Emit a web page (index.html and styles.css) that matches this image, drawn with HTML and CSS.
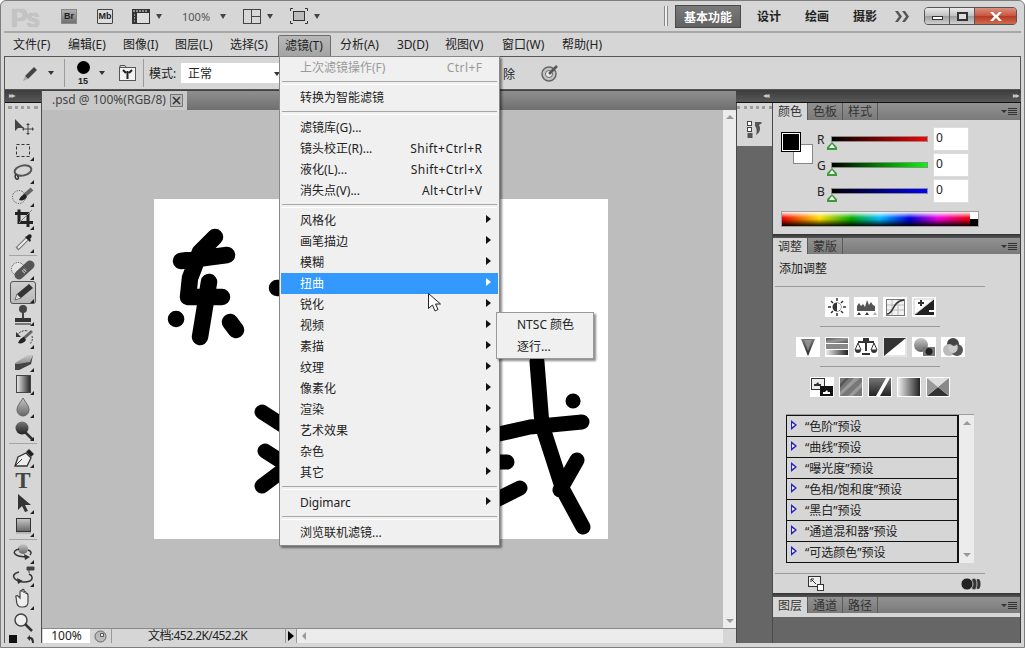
FILE: index.html
```html
<!DOCTYPE html>
<html lang="zh-CN">
<head>
<meta charset="utf-8">
<title>Photoshop</title>
<link rel="stylesheet" href="styles.css">
</head>
<body>
<svg class="defs" aria-hidden="true">
  <defs>
    <linearGradient id="gMetal" x1="0" y1="0" x2="0" y2="1"><stop offset="0" stop-color="#c8c8c8"/><stop offset="1" stop-color="#666"/></linearGradient>
    <linearGradient id="gDark" x1="0" y1="0" x2="0" y2="1"><stop offset="0" stop-color="#777"/><stop offset="1" stop-color="#222"/></linearGradient>
    <linearGradient id="gH" x1="0" y1="0" x2="1" y2="0"><stop offset="0" stop-color="#eee"/><stop offset="1" stop-color="#222"/></linearGradient>
    <linearGradient id="gDiag" x1="0" y1="0" x2="1" y2="1"><stop offset="0" stop-color="#555"/><stop offset=".5" stop-color="#999"/><stop offset="1" stop-color="#555"/></linearGradient>
  </defs>
</svg>
<div class="window">
  <header class="titlebar">
    <div class="title-left">
      <span class="ps-logo">Ps</span>
      <span class="app-btn app-br">Br</span>
      <span class="app-btn app-mb">Mb</span>
      <svg class="ti ti-film" width="18" height="15" viewBox="0 0 18 15"><rect x=".5" y=".5" width="17" height="14" fill="#ddd" stroke="#333"/><path d="M0 0h18v4H0zM0 4h5v11H0z" fill="#333"/><path d="M2 1v2M5 1v2M8 1v2M11 1v2M14 1v2M2 6h1M2 9h1M2 12h1" stroke="#eee"/></svg>
      <i class="caret caret-title c1"></i>
      <span class="zoom-label">100%</span>
      <i class="caret caret-title c2"></i>
      <svg class="ti ti-layout" width="18" height="15" viewBox="0 0 18 15"><rect width="18" height="15" fill="#444"/><rect x="1" y="1" width="7" height="13" fill="#d8d8d8"/><rect x="9" y="1" width="8" height="6" fill="#d8d8d8"/><rect x="9" y="8" width="8" height="6" fill="#d8d8d8"/></svg>
      <i class="caret caret-title c3"></i>
      <svg class="ti ti-screen" width="18" height="16" viewBox="0 0 18 16"><path d="M.5 3V.5H3M15 .5h2.5V3M17.5 13v2.5H15M3 15.5H.5V13" fill="none" stroke="#333"/><rect x="3.5" y="3.5" width="11" height="9" fill="#bbb" stroke="#333"/></svg>
      <i class="caret caret-title c4"></i>
    </div>
    <div class="title-right">
      <i class="double-line"></i>
      <span class="ws-btn ws-active">基本功能</span>
      <span class="ws-btn ws-design">设计</span>
      <span class="ws-btn ws-paint">绘画</span>
      <span class="ws-btn ws-photo">摄影</span>
      <svg class="ws-more" width="15" height="11" viewBox="0 0 15 11"><path d="M0 0h3l4 5.5L3 11H0l4-5.5zM7 0h3l4 5.5-4 5.5H7l4-5.5z" fill="#555"/></svg>
      <div class="win-btns">
        <span class="win-btn win-min"><i></i></span>
        <span class="win-btn win-max"><i></i></span>
        <span class="win-btn win-close"><svg width="12" height="9" viewBox="0 0 12 9"><path d="M0 0h3l3 3 3-3h3L8 4.5 12 9H9L6 6 3 9H0l4-4.5z" fill="#fff"/></svg></span>
      </div>
    </div>
  </header>

  <nav class="menubar">
    <span class="mi">文件(F)</span><span class="mi">编辑(E)</span><span class="mi">图像(I)</span><span class="mi">图层(L)</span><span class="mi">选择(S)</span><span class="mi mi-active">滤镜(T)</span><span class="mi">分析(A)</span><span class="mi">3D(D)</span><span class="mi">视图(V)</span><span class="mi">窗口(W)</span><span class="mi">帮助(H)</span>
  </nav>

  <div class="options">
    <i class="opt-handle"></i>
    <svg class="opt-pencil" width="16" height="16" viewBox="0 0 16 16"><path d="M3 11 12 2l3 3-9 9z" fill="#444"/><path d="M3 11l3 3-5 2z" fill="#aaa"/></svg>
    <i class="caret opt-c1"></i>
    <i class="opt-sep opt-s1"></i>
    <div class="brush-preview"><i class="brush-dot"></i><span class="brush-size">15</span></div>
    <i class="caret opt-c2"></i>
    <svg class="opt-brushes" width="17" height="16" viewBox="0 0 17 16"><rect x=".5" y="2.500" width="16" height="13" fill="#f2f2f2" stroke="#555"/><path d="M1 2V.5h5L7 2" fill="none" stroke="#555"/><path d="M4 5l3 3M13 5l-3 3M8.500 6v8" stroke="#222" stroke-width="2"/></svg>
    <i class="opt-sep opt-s2"></i>
    <span class="opt-label">模式:</span>
    <div class="opt-select">正常<i class="caret"></i></div>
    <span class="opt-auto">除</span>
    <svg class="opt-target" width="18" height="18" viewBox="0 0 18 18"><circle cx="8" cy="10" r="7" fill="#c4c4c4" stroke="#666" stroke-width="1.500"/><circle cx="8" cy="10" r="3.500" fill="#eee" stroke="#666"/><path d="M8 10 16 2" stroke="#555" stroke-width="2.500"/></svg>
  </div>

  <div class="main">
    <aside class="toolbox">
      <div class="dark-bar"><span class="bar-arrows">&#9656;&#9656;</span></div>
      <div class="tool-handle"></div>
      <div class="tool"><svg width="36" height="23" viewBox="0 0 36 23"><path d="M10 3v12l3-3h6z" fill="#444"/><path d="M23 8v10M18 13h10" stroke="#444"/><path d="M23 7l-2 2h4zM23 19l-2-2h4zM17 13l2-2v4zM29 13l-2-2v4z" fill="#444"/></svg></div>
      <div class="tool more"><svg width="36" height="23" viewBox="0 0 36 23"><rect x="11.500" y="5.500" width="13" height="12" fill="none" stroke="#333" stroke-dasharray="3 2"/></svg></div>
      <div class="tool more"><svg width="36" height="23" viewBox="0 0 36 23"><ellipse cx="18" cy="8.500" rx="8.500" ry="5" fill="none" stroke="#555" stroke-width="2" transform="rotate(-12 18 8.500)"/><path d="M11 12c-2 3 0 6 2 5 1-1 0-3-1-3" fill="none" stroke="#333" stroke-width="1.500"/></svg></div>
      <div class="tool more"><svg width="36" height="23" viewBox="0 0 36 23"><circle cx="14" cy="12" r="6.500" fill="none" stroke="#333" stroke-dasharray="1 1.500"/><path d="M27 4 19 11" stroke="#666" stroke-width="4"/><path d="M20 9c-3 1-5 3-6 6 3 1 6 0 8-3z" fill="#222"/></svg></div>
      <div class="tool more"><svg width="36" height="23" viewBox="0 0 36 23"><path d="M10 5.500h13V19M14 1.500v13h14" fill="none" stroke="#222" stroke-width="3"/><path d="M14 15 27 2" stroke="#888"/></svg></div>
      <div class="tool more"><svg width="36" height="23" viewBox="0 0 36 23"><path d="M12 18 23 7" stroke="#777" stroke-width="4"/><path d="M13 17 22 8" stroke="#eee" stroke-width="2"/><path d="M20 6l5 5 1-2-1-1 1-1c2-3-1-5-3-3l-1 1z" fill="#222"/></svg></div>
      <i class="tool-sep"></i>
      <div class="tool more"><svg width="36" height="23" viewBox="0 0 36 23"><circle cx="13" cy="11" r="6.500" fill="#e4e4e4" stroke="#333" stroke-dasharray="1 1.500"/><path d="M14 17 25 7" stroke="#555" stroke-width="9" stroke-linecap="round"/><path d="M18 14l3-3" stroke="#ccc" stroke-width="4" stroke-dasharray="1 1"/></svg></div>
      <div class="tool more tool-active"><svg width="36" height="23" viewBox="0 0 36 23"><path d="M10 19l2-6 12-10 4 4-12 10z" fill="#333"/><path d="M10 19l2-6 4 4z" fill="#ddd" stroke="#333" stroke-width=".5"/></svg></div>
      <div class="tool more"><svg width="36" height="23" viewBox="0 0 36 23"><circle cx="18" cy="5" r="4" fill="#444"/><path d="M17 8h2v6h-2z" fill="#444"/><path d="M10 14h16v4H10z" fill="#333"/><path d="M10 19h16v2H10z" fill="#777"/></svg></div>
      <div class="tool more"><svg width="36" height="23" viewBox="0 0 36 23"><path d="M27 4 18 12" stroke="#666" stroke-width="3"/><path d="M19 10c-3 1-5 3-6 6 3 1 6 0 8-3z" fill="#222"/><path d="M12 8c3-4 8-5 11-4M27 9c1 3 0 6-2 8" fill="none" stroke="#444" stroke-dasharray="2 1"/><path d="M11 5v5h5z" fill="#333"/></svg></div>
      <div class="tool more"><svg width="36" height="23" viewBox="0 0 36 23"><path d="M10 13 23 5h5l-2 9-12 6h-4z" fill="url(#gMetal)"/><path d="M10 14v6h4l12-6 2-9-3 7-12 2z" fill="#444"/></svg></div>
      <div class="tool more"><svg width="36" height="23" viewBox="0 0 36 23"><rect x="11.500" y="2.500" width="14" height="17" fill="url(#gH)" stroke="#444"/></svg></div>
      <div class="tool more"><svg width="36" height="23" viewBox="0 0 36 23"><path d="M18 2c3 5 6 8 6 12a6 6 0 0 1-12 0c0-4 3-7 6-12z" fill="url(#gMetal)" stroke="#666"/></svg></div>
      <div class="tool more"><svg width="36" height="23" viewBox="0 0 36 23"><path d="M20 13l8 8" stroke="#333" stroke-width="2.500"/><circle cx="17" cy="9" r="6.500" fill="url(#gDark)"/></svg></div>
      <i class="tool-sep"></i>
      <div class="tool more"><svg width="36" height="23" viewBox="0 0 36 23"><path d="M10 20l3-9 8-4 5 5-4 8z" fill="#eee" stroke="#333" stroke-width="1.300"/><path d="M10 20l7-7" stroke="#333"/><path d="M21 6l3-3 5 5-3 3z" fill="#222"/></svg></div>
      <div class="tool"><svg width="36" height="23" viewBox="0 0 36 23"><text x="18" y="19" text-anchor="middle" class="tool-t">T</text></svg></div>
      <div class="tool more"><svg width="36" height="23" viewBox="0 0 36 23"><path d="M13 2v16l4-4 3 6 3-1-3-6h6z" fill="#333"/></svg></div>
      <div class="tool more"><svg width="36" height="23" viewBox="0 0 36 23"><rect x="11.500" y="3.500" width="14" height="13" fill="url(#gMetal)" stroke="#333"/><path d="M11 18h15" stroke="#999"/></svg></div>
      <i class="tool-sep"></i>
      <div class="tool more"><svg width="36" height="23" viewBox="0 0 36 23"><circle cx="18" cy="7" r="5" fill="url(#gMetal)"/><path d="M14 7c-4 1-6 3-4 5s8 3 13 3" fill="none" stroke="#333" stroke-width="1.500"/><path d="M23 8c3 1 4 3 2 5" fill="none" stroke="#333" stroke-width="1.500"/><path d="M19 12l6 3-5 3z" fill="#333"/></svg></div>
      <div class="tool more"><svg width="36" height="23" viewBox="0 0 36 23"><path d="M22 2h7v3h-7zM24 5v3" fill="#444" stroke="#444"/><path d="M14 7c-5 1-7 4-4 7s10 4 15 2c3-2 3-5-1-7" fill="none" stroke="#333" stroke-width="1.500"/><path d="M12 13l6 3-5 3z" fill="#333"/></svg></div>
      <div class="tool more"><svg width="36" height="23" viewBox="0 0 36 23"><path d="M11 9c-1-1 1-2 2-1l2 2 0-6c0-2 2-2 2 0v-2c0-1 2-1 2 0v3c0-2 2-2 2 0v1c0-1 2-1 2 1v7c0 3-2 5-5 5h-2c-2 0-3-1-4-3z" fill="#eee" stroke="#444" stroke-width="1.200"/></svg></div>
      <div class="tool"><svg width="36" height="23" viewBox="0 0 36 23"><circle cx="16" cy="9" r="6" fill="#eee" stroke="#444" stroke-width="1.500"/><path d="M20 13l7 7" stroke="#333" stroke-width="2.500"/></svg></div>
      <div class="tool-colors"><i class="tc-fg"></i><svg width="9" height="8" viewBox="0 0 9 8"><path d="M1 3l3-3v2c3 0 4 2 4 6H6c0-2-1-4-2-4v2z" fill="#333"/></svg></div>
    </aside>

    <section class="docs">
      <div class="tabstrip">
        <div class="doc-tab"><span>.psd @ 100%(RGB/8)</span><svg width="13" height="13" viewBox="0 0 13 13"><rect x=".5" y=".5" width="12" height="12" fill="#bbb" stroke="#777"/><path d="M3 3l7 7M10 3l-7 7" stroke="#333" stroke-width="1.500"/></svg></div>
      </div>
      <div class="workspace">
        <div class="canvas-area">
          <div class="canvas">
            <svg width="454" height="340" viewBox="154 199 454 340" class="ink">
              <path class="ink-thick" d="M181 261 227 255M215 237 200 252 190 278 188 297 222 297M209 282 200 337M176 319h.1M230 322 236 330M277 288h10"/>
              <path d="M262 412 290 430M265 451 290 467M262 486 290 465"/>
              <path d="M537 362 542 425 563 490 583 527M490 436 530 427 582 422M573 401h.1M577 460 560 490M490 462 507 462M490 503 520 488"/>
            </svg>
          </div>
        </div>
        <div class="vscroll"><i class="arrow-up"></i><i class="arrow-down"></i></div>
      </div>
      <div class="statusbar">
        <span class="zoom-field">100%</span>
        <span class="status-icon"><svg width="13" height="13" viewBox="0 0 13 13"><circle cx="6.500" cy="6.500" r="5.500" fill="#bbb" stroke="#666"/><path d="M6.500 3.500h3v3h-3z" fill="#eee" stroke="#555"/></svg></span>
        <span class="status-text">文档:452.2K/452.2K</span>
        <span class="status-arrow"><i></i></span>
        <div class="hscroll"><i class="arrow-left"></i></div>
      </div>
    </section>

    <div class="right-col">
      <div class="dark-bar dark-bar-right"><span class="bar-arrows">&#9666;&#9666;</span><span class="bar-arrows">&#9656;&#9656;</span></div>
      <div class="right-row">
        <aside class="dock">
          <div class="dock-box">
            <div class="tool-handle dock-handle"></div>
            <svg class="dock-icon" width="16" height="17" viewBox="0 0 16 17"><rect x=".5" y=".5" width="4" height="4" fill="#fff" stroke="#444"/><rect x=".5" y="6.500" width="4" height="4" fill="#fff" stroke="#444"/><rect x=".5" y="12" width="5" height="5" fill="#555"/><path d="M8 1h6l1 1-3 2c2 3 1 8-3 10 1-3 1-7-1-9z" fill="#555"/></svg>
          </div>
        </aside>
        <aside class="panels">
          <div class="tabs">
            <span class="tab tab-on">颜色</span><span class="tab">色板</span><span class="tab">样式</span>
            <span class="panel-menu"><i></i><b></b></span>
          </div>
          <div class="color-panel">
            <div class="color-top">
              <div class="swatches"><i class="sw-bg"></i><i class="sw-fg"></i></div>
              <div class="sliders">
                <div class="slider"><span class="s-label">R</span><div class="track track-r"><i class="thumb"></i></div><span class="s-input">0</span></div>
                <div class="slider"><span class="s-label">G</span><div class="track track-g"><i class="thumb"></i></div><span class="s-input">0</span></div>
                <div class="slider"><span class="s-label">B</span><div class="track track-b"><i class="thumb"></i></div><span class="s-input">0</span></div>
              </div>
            </div>
            <div class="spectrum"><div class="spec-hues"></div><div class="spec-bw"></div></div>
          </div>
          <div class="panel-gap"></div>
          <div class="tabs tabs-adj">
            <span class="tab tab-on">调整</span><span class="tab">蒙版</span>
            <span class="panel-menu"><i></i><b></b></span>
          </div>
          <div class="adj-panel">
            <div class="adj-title">添加调整</div>
            <div class="rule"></div>
            <div class="adj-group">
              <div class="adj-row">
                <svg class="adj" viewBox="0 0 24 20"><circle cx="12" cy="10" r="4.500" fill="#333"/><path d="M12 6a4 4 0 0 1 0 8z" fill="#fff"/><path d="M12 1v3M12 16v3M3 10h3M18 10h3M6 4l2 2M18 4l-2 2M6 16l2-2M18 16l-2-2" stroke="#333" stroke-width="1.500"/></svg>
                <svg class="adj" viewBox="0 0 24 20"><path d="M3 14V9l2-3 2 3 2-2 2 3 2-7 2 5 2-3 2 3 2 1v5z" fill="#555"/><path d="M3 18l2-3 2 3zM11 18l2-3 2 3z" fill="#333"/><path d="M19 18l2-3 2 3z" fill="#aaa"/></svg>
                <svg class="adj" viewBox="0 0 24 20"><rect x="3.500" y="2.500" width="18" height="16" fill="#f2f2f2" stroke="#777"/><path d="M9 3v15M15 3v15M4 8h17M4 13h17" stroke="#bbb"/><path d="M4 17c7 0 5-13 17-14" fill="none" stroke="#333" stroke-width="1.500"/></svg>
                <svg class="adj" viewBox="0 0 24 20"><path d="M2 18 22 2v16z" fill="#222"/><path d="M2 2h20L2 18z" fill="#fff" stroke="#ccc"/><path d="M6 6h6M9 3v6" stroke="#333" stroke-width="2"/><path d="M17 14h6" stroke="#fff" stroke-width="2"/></svg>
              </div>
              <div class="adj-divider"></div>
              <div class="adj-row">
                <svg class="adj" viewBox="0 0 24 20"><path d="M5 2h14l-7 17z" fill="url(#gDark)"/><path d="M8 3h8l-4 11z" fill="#aaa" opacity=".6"/></svg>
                <svg class="adj" viewBox="0 0 24 20"><rect x="1" y="1" width="22" height="5" fill="url(#gDiag)"/><rect x="1" y="7" width="22" height="5" fill="#888"/><rect x="1" y="13" width="22" height="5" fill="url(#gH)"/></svg>
                <svg class="adj" viewBox="0 0 24 20"><path d="M12 2v12M4 5h16" stroke="#333" stroke-width="2"/><path d="M9 1h6v3H9zM8 16h8v2H8z" fill="#333"/><path d="M1 13 4 6l3 7zM17 13l3-7 3 7z" fill="none" stroke="#333"/><path d="M1 13h6a3 3 0 0 1-6 0zM17 13h6a3 3 0 0 1-6 0z" fill="#333"/></svg>
                <svg class="adj" viewBox="0 0 24 20"><rect x="1" y="1" width="22" height="18" fill="#fff" stroke="#ccc"/><path d="M1 1h22L1 19z" fill="#333"/></svg>
                <svg class="adj" viewBox="0 0 24 20"><circle cx="9" cy="8" r="7" fill="url(#gMetal)"/><rect x="11" y="10" width="12" height="9" fill="#777"/><circle cx="17" cy="14.500" r="3.500" fill="#222"/></svg>
                <svg class="adj" viewBox="0 0 24 20"><circle cx="12" cy="7" r="6" fill="#444"/><circle cx="8" cy="13" r="6" fill="#bbb"/><circle cx="16" cy="13" r="6" fill="#555"/><path d="M8 7.500a6 6 0 0 0 8 0 6 6 0 0 1-4 9 6 6 0 0 1-4-9z" fill="#ccc"/></svg>
              </div>
              <div class="adj-divider"></div>
              <div class="adj-row">
                <svg class="adj" viewBox="0 0 24 20"><rect x="1.500" y="1.500" width="13" height="11" fill="#eee" stroke="#333"/><path d="M4 9h7V7H9L8 5 6 7H4z" fill="#333"/><rect x="10" y="9" width="13" height="10" fill="#111"/><path d="M13 17h7v-2h-2l-1-2-2 2h-2z" fill="#fff"/></svg>
                <svg class="adj" viewBox="0 0 24 20"><rect x="1" y="1" width="22" height="18" fill="#777"/><path d="M1 15 15 1h6L1 19zM9 19 23 5v5l-9 9z" fill="#999"/><path d="M1 7l6-6h3L1 11z" fill="#555"/></svg>
                <svg class="adj" viewBox="0 0 24 20"><rect x="1" y="1" width="22" height="18" fill="url(#gDark)"/><path d="M8 19 18 1h4L12 19z" fill="#fff"/></svg>
                <svg class="adj" viewBox="0 0 24 20"><rect x="1" y="1" width="22" height="18" fill="url(#gH)"/></svg>
                <svg class="adj" viewBox="0 0 24 20"><path d="M1 1h22L12 10z" fill="#ddd"/><path d="M1 19h22L12 10z" fill="#333"/><path d="M1 1l11 9L1 19z" fill="#999"/><path d="M23 1 12 10l11 9z" fill="#888"/></svg>
              </div>
            </div>
            <div class="presets">
              <ul class="preset-list">
                <li>“色阶”预设</li><li>“曲线”预设</li><li>“曝光度”预设</li><li>“色相/饱和度”预设</li><li>“黑白”预设</li><li>“通道混和器”预设</li><li>“可选颜色”预设</li>
              </ul>
              <div class="preset-scroll"><i class="arrow-up"></i><i class="arrow-down"></i></div>
            </div>
            <div class="rule rule-foot"></div>
            <div class="adj-foot">
              <svg width="16" height="15" viewBox="0 0 16 15"><rect x=".5" y=".5" width="12" height="10" fill="#eee" stroke="#333"/><path d="M3 3l5 5M3 3h3M3 3v3" stroke="#333"/><rect x="9.500" y="8.500" width="6" height="6" fill="#fff" stroke="#333"/></svg>
              <svg width="20" height="16" viewBox="0 0 20 16"><ellipse cx="17" cy="8" rx="2.500" ry="5" fill="#333"/><ellipse cx="13" cy="8" rx="3" ry="6" fill="#333" stroke="#d6d6d6" stroke-width=".8"/><circle cx="6" cy="8" r="6" fill="#222" stroke="#d6d6d6" stroke-width=".8"/></svg>
            </div>
          </div>
          <div class="panel-gap"></div>
          <div class="tabs tabs-layers">
            <span class="tab tab-on">图层</span><span class="tab">通道</span><span class="tab">路径</span>
            <span class="panel-menu"><i></i><b></b></span>
          </div>
          <div class="layers-strip"></div>
          <div class="panel-empty"></div>
        </aside>
      </div>
    </div>
  </div>

  <div class="menu">
    <div class="m-row m-disabled"><span>上次滤镜操作(F)</span><span>Ctrl+F</span></div>
    <i class="m-sep"></i>
    <div class="m-row"><span>转换为智能滤镜</span></div>
    <i class="m-sep"></i>
    <div class="m-row"><span>滤镜库(G)...</span></div>
    <div class="m-row"><span>镜头校正(R)...</span><span>Shift+Ctrl+R</span></div>
    <div class="m-row"><span>液化(L)...</span><span>Shift+Ctrl+X</span></div>
    <div class="m-row"><span>消失点(V)...</span><span>Alt+Ctrl+V</span></div>
    <i class="m-sep"></i>
    <div class="m-row has-sub"><span>风格化</span></div>
    <div class="m-row has-sub"><span>画笔描边</span></div>
    <div class="m-row has-sub"><span>模糊</span></div>
    <div class="m-row has-sub m-hot"><span>扭曲</span></div>
    <div class="m-row has-sub"><span>锐化</span></div>
    <div class="m-row has-sub"><span>视频</span></div>
    <div class="m-row has-sub"><span>素描</span></div>
    <div class="m-row has-sub"><span>纹理</span></div>
    <div class="m-row has-sub"><span>像素化</span></div>
    <div class="m-row has-sub"><span>渲染</span></div>
    <div class="m-row has-sub"><span>艺术效果</span></div>
    <div class="m-row has-sub"><span>杂色</span></div>
    <div class="m-row has-sub"><span>其它</span></div>
    <i class="m-sep"></i>
    <div class="m-row has-sub"><span>Digimarc</span></div>
    <i class="m-sep"></i>
    <div class="m-row"><span>浏览联机滤镜...</span></div>
  </div>
  <div class="submenu">
    <div class="m-row"><span>NTSC 颜色</span></div>
    <div class="m-row"><span>逐行...</span></div>
  </div>
  <svg class="cursor" width="14" height="20" viewBox="0 0 14 20"><path d="M.5.500v15l4-3.500 2.500 6 3-1.500-2.500-5.500h5z" fill="#fff" stroke="#222"/></svg>
</div>
</body>
</html>
```
FILE: styles.css
```css
* { box-sizing: border-box; margin: 0; padding: 0; }
html, body { width: 1025px; height: 648px; overflow: hidden; background: #fff; }
body { font: 12px/1.2 "Noto Sans", "Noto Sans CJK SC", sans-serif; color: #222; }
i { display: block; font-style: normal; }
.defs { position: absolute; width: 0; height: 0; }

.window {
  position: relative;
  width: 1025px; height: 648px;
  background: #d6d6d6;
  border: 1px solid #7d7d7d;
  border-radius: 6px 6px 0 0;
  padding: 0 3px 4px;
  display: flex; flex-direction: column;
}

/* title bar */
.titlebar {
  height: 32px; flex: none;
  display: flex; justify-content: space-between; align-items: center;
  border-bottom: 2px solid #a8a8a8;
}
.title-left, .title-right { display: flex; align-items: center; height: 30px; }
.ps-logo { font: bold 25px/26px "Liberation Sans", sans-serif; color: #c4c4c4; text-shadow: 0 0 1px #a8a8a8; width: 50px; margin-left: 7px; margin-top: 3px; letter-spacing: -1.5px; }
.app-btn { width: 16px; height: 15px; font: bold 9px/13px "Liberation Sans", sans-serif; text-align: center; color: #222; }
.app-br { background: linear-gradient(#b0b0b0, #707070); border: 1px solid #888; }
.app-mb { background: #ddd; border: 1px solid #444; margin-left: 20px; border-radius: 1px; }
.ti { flex: none; }
.ti-film { margin-left: 19px; }
.caret { width: 0; height: 0; border: 3px solid transparent; border-top: 4px solid #333; border-bottom: 0; flex: none; }
.caret-title { border-width: 5px 3.5px 0; border-top-color: #444; }
.c1 { margin-left: 6px; }
.zoom-label { margin-left: 20px; width: 38px; font: 11px "Noto Sans", sans-serif; color: #555; }
.ti-layout { margin-left: 17px; }
.c3 { margin-left: 6px; }
.ti-screen { margin-left: 17px; }
.c4 { margin-left: 6px; }

.double-line { width: 4px; height: 20px; border-left: 1px solid #888; border-right: 1px solid #888; background: #eee; }
.ws-btn { font-weight: bold; font-size: 12px; color: #222; flex: none; width: 24px; line-height: 16px; font-family: "Noto Sans CJK SC", sans-serif; white-space: nowrap; }
.ws-active { width: 66px; height: 23px; line-height: 21px; margin-left: 7px; text-align: center; color: #fff; background: linear-gradient(#7a7a7a, #626262); border: 1px solid #4a4a4a; }
.ws-design { margin-left: 16px; }
.ws-paint { margin-left: 24px; }
.ws-photo { margin-left: 24px; }
.ws-more { margin-left: 18px; }
.win-btns { display: flex; margin-left: 14px; margin-right: 4px; height: 18px; border: 1px solid #555; border-radius: 4px; overflow: hidden; }
.win-btn { display: flex; align-items: center; justify-content: center; background: linear-gradient(#eaeaea, #c0c0c0 50%, #9e9e9e 52%, #d0d0d0); border-right: 1px solid #555; }
.win-min { width: 25px; }
.win-min i { width: 11px; height: 4px; background: #fff; border: 1px solid #333; margin-top: 3px; }
.win-max { width: 25px; }
.win-max i { width: 11px; height: 9px; border: 2px solid #333; background: #ddd; }
.win-close { width: 41px; border-right: 0; background: linear-gradient(#d99081, #c8563f 48%, #b63a24 52%, #cf6a4e); }

/* menu bar */
.menubar {
  height: 23px; flex: none;
  display: grid;
  grid-template-columns: 55px 55px 52px 55px 55px 55px 57px 48px 57px 60px 50px;
  padding-left: 9px;
  align-items: center;
  white-space: nowrap;
}
.mi { line-height: 20px; }
.mi-active {
  margin-left: -7px; padding-left: 6px; width: 53px; height: 21px; margin-top: 2px;
  background: linear-gradient(#b8b8b8, #a4a4a4);
  border: 1px solid #6c6c6c; border-bottom: 0; border-radius: 2px 2px 0 0;
}

/* options */
.options {
  height: 34px; flex: none;
  display: flex; align-items: center;
  border: 1px solid #565656;
  white-space: nowrap;
}
.opt-handle { width: 3px; height: 23px; margin-left: 4px; background: radial-gradient(circle, #999 45%, transparent 50%) 0 0 / 2px 2px; }
.opt-pencil { margin-left: 10px; flex: none; }
.opt-c1 { margin-left: 10px; }
.opt-sep { width: 1px; height: 28px; background: #9c9c9c; flex: none; }
.opt-s1 { margin-left: 10px; }
.brush-preview { width: 18px; margin-left: 9px; display: flex; flex-direction: column; align-items: center; flex: none; }
.brush-dot { width: 13px; height: 13px; border-radius: 50%; background: #000; }
.brush-size { font: bold 9px/10px "Liberation Sans", sans-serif; margin-top: 2px; }
.opt-c2 { margin-left: 7px; }
.opt-brushes { margin-left: 14px; flex: none; }
.opt-s2 { margin-left: 7px; }
.opt-label { margin-left: 5px; width: 32px; padding-top: 2px; }
.opt-select { width: 99px; height: 20px; line-height: 19px; padding: 1px 0 0 7px; background: #fff; display: flex; align-items: center; justify-content: space-between; }
.opt-auto { margin-left: 223px; width: 13px; flex: none; font-family: "Noto Sans CJK SC", sans-serif; padding-top: 2px; }
.opt-target { margin-left: 25px; flex: none; }

/* main */
.main { flex: 1; min-height: 0; display: flex; }
.dark-bar { height: 13px; flex: none; background: linear-gradient(#3c3c3c, #585858); border-bottom: 1px solid #111; display: flex; align-items: center; justify-content: space-between; padding: 0 4px; }
.bar-arrows { font: 8px/12px "DejaVu Sans", sans-serif; color: #c8c8c8; letter-spacing: -1.5px; }

.toolbox { width: 38px; flex: none; display: flex; flex-direction: column; border-left: 1px solid #5c5c5c; border-right: 1px solid #4e4e4e; overflow: hidden; }
.tool-handle { height: 10px; flex: none; margin: 3px 3px 0; border-top: 3px dotted #9c9c9c; }
.tool { position: relative; height: 23px; flex: none; width: 36px; }
.tool svg { display: block; }
.tool.more::after { content: ""; position: absolute; right: 7px; bottom: 1px; width: 0; height: 0; border-style: solid; border-width: 0 0 4px 4px; border-color: transparent transparent #222 transparent; }
.tool-active { background: linear-gradient(#d0d0d0, #b8b8b8); outline: 1px solid #555; outline-offset: -1px; border-radius: 3px; margin: 0 5px; width: 26px; }
.tool-active svg { margin-left: -5px; }
.tool-active.more::after { right: 2px; }
.tool-t { font: bold 23px "Liberation Serif", serif; fill: #444; }
.tool-sep { flex: none; margin: 1px 4px 0; border-top: 1px solid #a4a4a4; height: 3px; }
.tool-colors { display: flex; justify-content: space-between; padding: 1px 6px 0 4px; flex: none; }
.tc-fg { width: 8px; height: 8px; background: #111; }

.docs { width: 694px; flex: none; display: flex; flex-direction: column; }
.tabstrip { height: 20px; flex: none; background: linear-gradient(#8f8f8f, #6f6f6f); border-top: 1px solid #404040; }
.doc-tab { width: 145px; height: 19px; background: #c9c9c9; display: flex; align-items: center; gap: 6px; padding-left: 10px; color: #444; white-space: nowrap; }
.doc-tab span { width: 112px; }
.workspace { flex: 1; min-height: 0; display: flex; }
.canvas-area { width: 681px; flex: none; background: #bdbdbd; display: flex; align-items: center; justify-content: center; padding-right: 3px; }
.canvas { width: 454px; height: 340px; background: #fff; flex: none; }
.ink { display: block; fill: none; stroke: #000; stroke-width: 15; stroke-linecap: round; stroke-linejoin: round; }
.ink-thick { stroke-width: 16.5; }
.vscroll { width: 13px; flex: none; background: #ececec; display: flex; flex-direction: column; justify-content: space-between; align-items: center; padding: 5px 0; }
.arrow-up { width: 0; height: 0; border: 4px solid transparent; border-top: 0; border-bottom: 4px solid #999; }
.arrow-down { width: 0; height: 0; border: 4px solid transparent; border-bottom: 0; border-top: 4px solid #999; }
.arrow-left { width: 0; height: 0; border: 4px solid transparent; border-left: 0; border-right: 4px solid #999; }

.statusbar { height: 15px; flex: none; display: flex; align-items: stretch; border-top: 1px solid #8a8a8a; background: #d6d6d6; white-space: nowrap; }
.zoom-field { width: 47px; background: #fff; text-align: center; line-height: 14px; margin-left: 1px; }
.status-icon { width: 22px; border-right: 1px solid #999; display: flex; align-items: center; justify-content: center; }
.status-text { width: 173px; text-align: center; line-height: 14px; letter-spacing: -.55px; padding-right: 2px; }
.status-arrow { width: 12px; border-left: 1px solid #999; border-right: 1px solid #999; display: flex; align-items: center; justify-content: center; }
.status-arrow i { border: 5px solid transparent; border-left: 6px solid #000; border-right: 0; }
.hscroll { width: 426px; background: #ececec; display: flex; align-items: center; padding-left: 5px; }

.right-col { flex: 1; min-width: 0; display: flex; flex-direction: column; }
.dark-bar-right { padding: 0 3px 0 27px; }
.right-row { flex: 1; min-height: 0; display: flex; }
.dock { width: 36px; flex: none; background: #666; border-left: 1px solid #4a4a4a; }
.dock-box { height: 43px; background: #d6d6d6; display: flex; flex-direction: column; align-items: center; }
.dock-handle { width: 100%; margin: 3px 5px 0; height: 11px; }
.dock-icon { display: block; margin-top: 4px; }

.panels { flex: 1; min-width: 0; display: flex; flex-direction: column; border-left: 1px solid #4a4a4a; border-right: 1px solid #3e3e3e; }
.tabs { height: 17px; flex: none; display: flex; background: linear-gradient(#929292, #7a7a7a); }
.tabs-adj, .tabs-layers { height: 16px; }
.tab { width: 35px; text-align: center; line-height: 18px; color: #333; border-right: 1px solid #5a5a5a; }
.tabs-adj .tab, .tabs-layers .tab { line-height: 17px; }
.tab-on { background: #d6d6d6; }
.panel-menu { margin-left: auto; margin-right: 3px; display: flex; align-items: center; gap: 1px; }
.panel-menu i { border: 3px solid transparent; border-top: 3px solid #333; border-bottom: 0; }
.panel-menu b { width: 9px; height: 7px; background: repeating-linear-gradient(#333 0 1px, transparent 1px 2px); display: block; }

.color-panel { height: 114px; flex: none; }
.color-top { display: flex; padding: 8px 0 0 8px; }
.swatches { position: relative; width: 36px; height: 40px; margin-top: 4px; flex: none; }
.sw-fg { position: absolute; left: 0; top: 0; width: 20px; height: 20px; background: #000; border: 1px solid #000; box-shadow: inset 0 0 0 1px #fff; }
.sw-bg { position: absolute; left: 12px; top: 12px; width: 20px; height: 20px; background: #fff; border: 1px solid #888; }
.sliders { display: flex; flex-direction: column; gap: 4px; }
.slider { display: flex; align-items: center; height: 22px; }
.s-label { width: 14px; margin-top: 3px; }
.track { position: relative; width: 97px; height: 6px; border: 1px solid #8c8c8c; margin-top: 0; }
.track-r { background: linear-gradient(90deg, #000, #f00); }
.track-g { background: linear-gradient(90deg, #000, #0f0); }
.track-b { background: linear-gradient(90deg, #000, #00f); }
.thumb { position: absolute; left: -5px; top: 5px; width: 10px; height: 8px; background: #3a9a3a; clip-path: polygon(50% 0, 100% 65%, 100% 100%, 0 100%, 0 65%); }
.thumb::after { content: ""; display: block; position: absolute; left: 2px; top: 2px; width: 6px; height: 4px; background: #fff; clip-path: polygon(50% 0, 100% 100%, 0 100%); }
.s-input { width: 34px; height: 22px; margin-left: 6px; background: #fff; padding-left: 2px; line-height: 19px; box-shadow: 0 0 0 1px #ddd; }
.spectrum { display: flex; width: 198px; height: 16px; margin: 9px 0 0 8px; border: 1px solid #a0a0a0; }
.spec-hues { flex: 1; background:
  linear-gradient(rgba(255,255,255,.95), rgba(255,255,255,0) 42%, rgba(0,0,0,0) 50%, rgba(0,0,0,.95)),
  linear-gradient(90deg, #e00, #fd0 20%, #0a0 37%, #0bf 52%, #00d 68%, #e0d 83%, #e00); }
.spec-bw { width: 8px; background: linear-gradient(#fff 50%, #000 50%); }

.panel-gap { height: 4px; flex: none; background: linear-gradient(#333, #555); }
.adj-panel { height: 339px; flex: none; }
.adj-title { height: 32px; padding: 7px 0 0 6px; line-height: 16px; }
.rule { width: 210px; height: 1px; margin-left: 2px; background: #9a9a9a; }
.adj-group { width: 214px; margin-top: 10px; display: flex; flex-direction: column; align-items: center; }
.adj-row { display: flex; gap: 5px; }
.adj { width: 24px; height: 20px; background: #fff; display: block; }
.adj-divider { width: 120px; height: 1px; background: #9a9a9a; margin: 9px 0 10px; }
.presets { display: flex; width: 188px; margin: 17px 0 0 13px; height: 149px; border-top: 1px solid #9c9c9c; }
.preset-list { list-style: none; width: 173px; border: 1px solid #111; border-width: 1px 2px 1px 1px; }
.preset-list li { height: 21px; line-height: 22px; padding-left: 18px; border-bottom: 1px solid #111; position: relative; white-space: nowrap; }
.preset-list li:last-child { border-bottom: 0; height: 20px; }
.preset-list li::before { content: ""; position: absolute; left: 4px; top: 4px; width: 0; height: 0; border: 5px solid transparent; border-left: 6px solid #2323c0; border-right: 0; }
.preset-list li::after { content: ""; position: absolute; left: 5px; top: 7px; width: 0; height: 0; border: 2px solid transparent; border-left: 3px solid #eef; border-right: 0; }
.preset-scroll { width: 15px; background: #ececec; display: flex; flex-direction: column; justify-content: space-between; align-items: center; padding: 6px 0; }
.rule-foot { margin-top: 10px; }
.adj-foot { display: flex; justify-content: space-between; align-items: center; height: 18px; padding: 1px 0 0 35px; width: 208px; }
.layers-strip { height: 4px; flex: none; background: #d6d6d6; }
.panel-empty { flex: 1; background: #666; }

/* dropdown */
.menu {
  position: absolute; left: 278px; top: 55px; z-index: 5;
  width: 221px; padding-bottom: 2px;
  background: #f0f0f0; border: 1px solid #888;
  box-shadow: 2px 2px 2px rgba(0,0,0,.45);
  white-space: nowrap;
}
.m-row { height: 21px; margin: 0 1px; padding: 1px 16px 0 19px; display: flex; justify-content: space-between; align-items: center; }
.m-row span + span { letter-spacing: .45px; margin-right: -.45px; }
.m-disabled { color: #9a9a9a; }
.m-sep { height: 9px; margin: 0 2px; padding-top: 3px; }
.m-sep::before { content: ""; display: block; height: 2px; border-top: 1px solid #a6a6a6; border-bottom: 1px solid #fff; }
.has-sub::after { content: ""; width: 0; height: 0; margin: -4px -9px 0 0; border: 4.500px solid transparent; border-left: 5px solid #111; border-right: 0; }
.m-hot { background: #3399ff; color: #fff; }
.m-hot::after { border-left-color: #fff; }
.submenu {
  position: absolute; left: 495px; top: 311px; z-index: 6;
  width: 98px; height: 47px; padding-top: 1px;
  background: #f0f0f0; border: 1px solid #999;
  box-shadow: 2px 2px 2px rgba(0,0,0,.45);
  white-space: nowrap;
}
.submenu .m-row { margin: 0; padding-left: 20px; padding-right: 0; }
.submenu .m-row + .m-row { padding-top: 3px; }
.cursor { position: absolute; left: 427px; top: 292px; z-index: 7; }
```
